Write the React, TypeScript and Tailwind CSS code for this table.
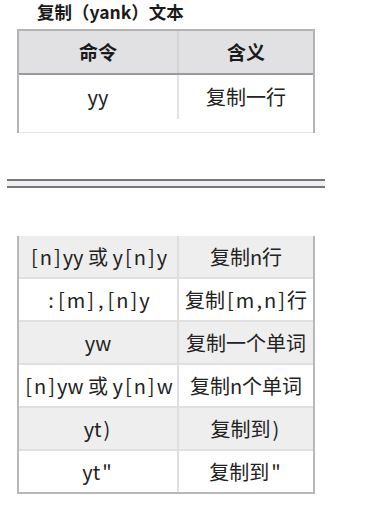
const font = { fontFamily: '"Noto Sans CJK SC", "Noto Sans", sans-serif' };

const rows: [string, string][] = [
  ['[n]yy 或 y[n]y', '复制n行'],
  [':[m],[n]y', '复制[m,n]行'],
  ['yw', '复制一个单词'],
  ['[n]yw 或 y[n]w', '复制n个单词'],
  ['yt)', '复制到)'],
  ['yt"', '复制到"'],
];

// 方括号、逗号、冒号、括号、引号在原图里字距偏宽
function Spaced({ text }: { text: string }) {
  return (
    <>
      {text.split(/([\[\],:)"])/).map((part, i) =>
        /^[\[\],:)"]$/.test(part) ? (
          <span key={i} className="mx-[2px]">{part}</span>
        ) : (
          <span key={i}>{part}</span>
        )
      )}
    </>
  );
}

export default function App() {
  return (
    <div className="w-[374px] h-[512px] bg-white text-[#222] overflow-hidden" style={font}>
      <h3 className="pl-[37px] pt-[1px] h-[29px] text-[17.5px] leading-[22px] font-bold text-[#1a1a1a]">
        复制（yank）文本
      </h3>

      {/* 表格1 */}
      <div className="ml-[17px] w-[298px] border-x-2 border-t-2 border-[#b4b4b6]">
        <div className="grid grid-cols-[160px_1fr] bg-[#e1e1e3] border-b-[2px] border-[#9a9a9c] text-[19px] font-bold text-[#1a1a1a]">
          <div className="h-[42px] flex items-center justify-center border-r-2 border-[#d3d3d5]">命令</div>
          <div className="h-[42px] flex items-center justify-center">含义</div>
        </div>
        <div className="grid grid-cols-[160px_1fr] text-[20px]">
          <div className="h-[44px] flex items-center justify-center border-r-2 border-[#e2e2e2]">yy</div>
          <div className="h-[44px] flex items-center justify-center">复制一行</div>
        </div>
        <div className="h-[14px] border-b border-[#e4e4e4]" />
      </div>

      {/* 分隔线 */}
      <div className="mt-[46px] ml-[7px] w-[318px] h-[9px] border-y-2 border-[#777] bg-[#eff0f4]" />

      {/* 表格2 */}
      <div className="mt-[48px] ml-[17px] w-[298px] border-x-2 border-b-2 border-[#b8b8ba]">
        {rows.map(([cmd, desc], i) => (
          <div
            key={cmd}
            className={`grid grid-cols-[160px_1fr] text-[20px] ${i % 2 === 0 ? 'bg-[#eeeeee]' : 'bg-white'} ${i < rows.length - 1 ? 'border-b-2 border-[#e0e0e0]' : ''}`}
          >
            <div className="h-[41px] flex items-center justify-center border-r-2 border-[#dedede] whitespace-nowrap">
              <Spaced text={cmd} />
            </div>
            <div className="h-[41px] flex items-center justify-center whitespace-nowrap">
              <Spaced text={desc} />
            </div>
          </div>
        ))}
      </div>
    </div>
  );
}
